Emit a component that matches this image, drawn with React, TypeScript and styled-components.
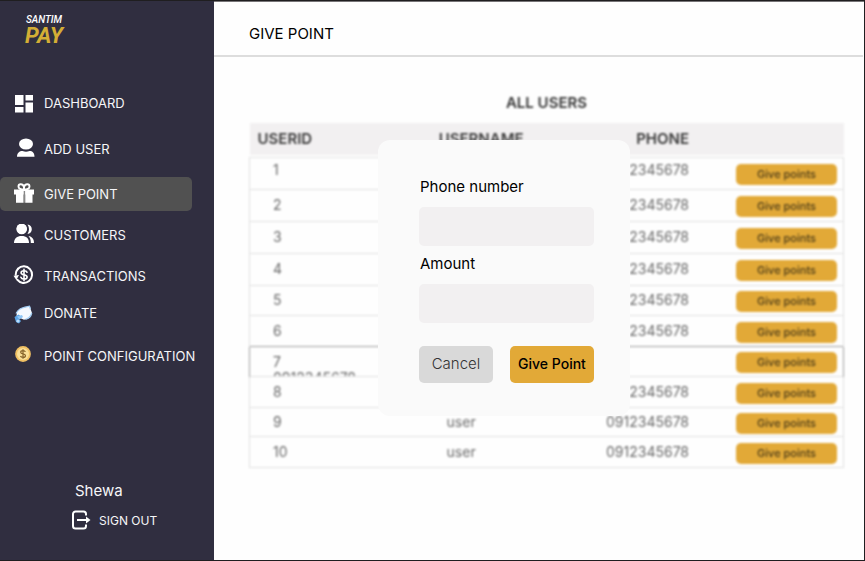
import React from "react";
import styled, { createGlobalStyle, css } from "styled-components";

const GlobalStyle = createGlobalStyle`
  *, *::before, *::after { box-sizing: border-box; }
  body { margin: 0; background: #fff; }
  body, button, input { font-family: Inter, "Open Sans", sans-serif; }
`;

const Frame = styled.div`
  display: flex;
  min-height: 100vh;
  border: 1px solid #1f1e20;
  border-left: 0;
`;

const Sidebar = styled.aside`
  display: flex;
  flex-direction: column;
  flex: 0 0 214px;
  padding: 11px 0 28px;
  background: #302e40;
  color: #f6f6f8;
`;

const Logo = styled.div`
  display: flex;
  flex-direction: column;
  width: 88px;
  height: 68px;
  align-items: center;
  font-family: Roboto, sans-serif;
  font-style: italic;
`;

const LogoTop = styled.span`
  font-size: 10px;
  line-height: 15px;
  font-weight: 500;
  color: #fff;
`;

const LogoBottom = styled.span`
  font-size: 22px;
  line-height: 17px;
  font-weight: 700;
  color: #d4ae35;
`;

const Menu = styled.ul`
  display: grid;
  grid-template-rows: 46px 46px 44px 38px 44px 30px 56px;
  align-items: center;
  margin: 0;
  padding: 0;
  list-style: none;
`;

const MenuLink = styled.a<{ $active?: boolean }>`
  display: flex;
  align-items: center;
  gap: 9px;
  width: 192px;
  height: 34px;
  padding-left: 13px;
  border-radius: 5px;
  color: inherit;
  font-size: 13px;
  white-space: nowrap;
  text-decoration: none;
  ${(p) => p.$active && css`background: #515151;`}

  svg { flex: none; }
`;

const Account = styled.div`
  display: flex;
  flex-direction: column;
  gap: 5px;
  margin-top: auto;
  padding-left: 71px;
`;

const AccountName = styled.span`
  padding-left: 4px;
  font-size: 15px;
  line-height: 24px;
`;

const SignOut = styled.button`
  display: flex;
  align-items: center;
  gap: 8px;
  height: 24px;
  padding: 0;
  border: 0;
  background: none;
  color: inherit;
  font-size: 12px;
`;

const Main = styled.main`
  position: relative;
  flex: 1;
  min-width: 0;
  border-top: 1px solid #777577;
  background: #fefefe;
`;

const TopBar = styled.header`
  display: flex;
  align-items: center;
  height: 55px;
  margin-right: 1px;
  padding: 10px 0 0 35px;
  border-bottom: 2px solid #dddddd;
`;

const PageTitle = styled.h1`
  margin: 0;
  font-size: 15px;
  font-weight: 400;
  color: #000;
`;

const Users = styled.section`
  padding: 34px 20px 0 35px;
  filter: blur(0.8px);
`;

const UsersTitle = styled.h2`
  margin: 0 0 8px;
  font-size: 15px;
  line-height: 24px;
  font-weight: 600;
  text-align: center;
  color: #333;
`;

const UserTable = styled.table`
  width: 100%;
  table-layout: fixed;
  border-collapse: collapse;
  font-size: 14px;
  line-height: 24px;
  color: #6a6a6a;
`;

const Column = styled.col<{ $share: number }>`
  width: ${(p) => p.$share}%;
`;

const HeadCell = styled.th<{ $align?: string }>`
  height: 34px;
  padding: 0 0 2px 8px;
  box-shadow: inset 0 -2px #fefefe;
  background: #f2f0f1;
  color: #3a3a3a;
  font-size: 15px;
  font-weight: 600;
  text-align: ${(p) => p.$align ?? "left"};
`;

const NameHeadCell = styled(HeadCell)`
  padding-left: 0;
  text-align: center;
`;

const Row = styled.tr<{ $height: number; $selected?: boolean }>`
  height: ${(p) => p.$height}px;
  border: 1px solid #e2e2e2;
  border-bottom: none;
  ${(p) => p.$selected && css`border-color: #a0a0a0;`}

  &:last-child { border-bottom: 1px solid #e2e2e2; }
  &:first-child td:not(:last-child) { vertical-align: top; }
`;

const Cell = styled.td<{ $align?: string }>`
  padding: 0;
  text-align: ${(p) => p.$align ?? "left"};
`;

const NameCell = styled(Cell)`
  padding-right: 40px;
  text-align: center;
`;

const IdBox = styled.div<{ $clip?: boolean }>`
  padding-left: 23px;
  ${(p) => p.$clip && css`
    height: 29px;
    padding-top: 4px;
    line-height: 22px;
    overflow: hidden;
  `}
`;

const WrappedPhone = styled.div`
  line-height: 10px;
`;

const ActionCell = styled.td`
  padding: 3px 6px 0 0;
  text-align: right;
  line-height: 0;
`;

const RowButton = styled.button`
  width: 101px;
  height: 21px;
  padding: 0;
  border: 0;
  border-radius: 5px;
  background: #e2a937;
  color: #4a3a18;
  font-size: 11px;
  line-height: 21px;
  font-weight: 500;
`;

const Dialog = styled.form`
  position: absolute;
  top: 138px;
  left: 164px;
  display: flex;
  flex-direction: column;
  width: 252px;
  padding: 36px 36px 33px 41px;
  border-radius: 12px;
  background: #fafafa;
`;

const Field = styled.div`
  display: flex;
  flex-direction: column;
  gap: 9px;
  margin-bottom: 7px;
`;

const FieldLabel = styled.label`
  padding-left: 1px;
  font-size: 15px;
  line-height: 22px;
  color: #000;
`;

const FieldInput = styled.input`
  width: 100%;
  height: 39px;
  padding: 0 10px;
  border: 0;
  border-radius: 5px;
  background: #f2f0f1;
  font-size: 14px;
`;

const DialogActions = styled.div`
  display: flex;
  justify-content: space-between;
  margin-top: 16px;
`;

const DialogButton = styled.button<{ $primary?: boolean }>`
  width: ${(p) => (p.$primary ? 84 : 74)}px;
  height: 37px;
  padding: 0 0 3px;
  border: 0;
  border-radius: 5px;
  background: ${(p) => (p.$primary ? "#e2a937" : "#d9d9d9")};
  color: ${(p) => (p.$primary ? "#000" : "#333")};
  font-size: ${(p) => (p.$primary ? 14 : 15)}px;
  font-weight: ${(p) => (p.$primary ? 500 : 300)};
  white-space: nowrap;
`;

const Svg = ({ children }: { children: React.ReactNode }) => (
  <svg width="22" height="22" viewBox="0 0 22 22" fill="#fff" aria-hidden="true">
    {children}
  </svg>
);

const DashboardIcon = () => (
  <Svg>
    <path d="M2 3h8.500v10H2zM2 15h8.500v5.500H2zM12.500 3H20v5.500h-7.500zM12.500 10.500H20v10h-7.500z" />
  </Svg>
);

const UserIcon = () => (
  <Svg>
    <ellipse cx="13" cy="6" rx="7" ry="5.600" />
    <path d="M4 18.800c0-4 2.500-5.800 5.500-5.800 2.500 1 4.500 1 7 0 3 0 5 1.800 5 5.800z" />
  </Svg>
);

const GiftIcon = () => (
  <Svg>
    <path d="M1 6.500h20v5H1zM3 11h7.600v8.700H3zM12.200 11H19.500v8.700h-7.300z" />
    <g fill="none" stroke="#fff" strokeWidth="1.900">
      <path d="M11 6.500C9 6.500 5.500 6 5.500 3.500S9.500 0 11 4z" />
      <path d="M11 6.500c2 0 5.500-.500 5.500-3S12.500 0 11 4z" />
    </g>
    <path d="M10.700 8h1.400v11.700h-1.400z" fill="#888" />
  </Svg>
);

const CustomersIcon = () => (
  <Svg>
    <circle cx="8.700" cy="4.800" r="5" />
    <circle cx="8.700" cy="5" r="5.300" />
    <path d="M1 19c0-4.500 3-7 7.700-7s7.300 2.500 7.300 7z" />
    <path d="M14.500.500c2.700.300 4.300 2.200 4.300 4.700s-1.600 4.500-4.300 4.700c2-3.100 2-6.300 0-9.400z" />
    <path d="M15.500 12c3.500.700 5.700 3 5.500 7h-3.200c0-3.300-.600-5.200-2.300-7z" />
  </Svg>
);

const TransactionsIcon = () => (
  <Svg>
    <g fill="none" stroke="#fff" strokeWidth="2" strokeLinecap="round" transform="translate(0 -1)">
      <path d="M5 4.700a8.300 8.300 0 1 1-.800 11" />
      <path d="M2.700 10.800A8.300 8.300 0 0 1 5 4.700" />
      <path d="M14 8.300c-.400-1.300-1.500-1.600-2.900-1.600-1.700 0-3 .600-3 2 0 3 6 1.300 6 4.300 0 1.500-1.400 2.100-3.100 2.100-1.500 0-2.700-.500-3.100-1.800M11 5.200v11.500" strokeWidth="1.600" />
    </g>
    <path d="M.500 10.800l5.500-.700-2.700 4.800z" />
  </Svg>
);

const DonateIcon = () => (
  <Svg>
    <path d="M4 9.500L7.500 6.500 13 5l4-.500.800 3L19 11l-3.500 5.500-4.500 1.200-4-1.700-3.500-2z" fill="#f4f9ff" />
    <path d="M3 11.500C5 8 8 6 12 5.200l4.500-1 1 3M18.800 11c-.800 3.500-3 5.500-6.300 6.300" fill="none" stroke="#a5cff5" strokeWidth="1.200" />
    <path d="M1.500 15l4-2.500 2 1.500-1.500 3 2 2-2 2.500-3-1.500z" fill="#5ba4e6" />
    <path d="M4 14.500l5-1.500 1 2-3.500 2.500z" fill="#8fc6f6" />
    <circle cx="5" cy="19" r="1.600" fill="#b9dcfb" />
  </Svg>
);

const CoinIcon = () => (
  <Svg>
    <circle cx="10" cy="9" r="7.900" fill="#f0c063" />
    <circle cx="10" cy="9" r="6" fill="#fadf97" />
    <path d="M12.400 6.900c-.400-1-1.300-1.300-2.400-1.300-1.300 0-2.300.600-2.300 1.600 0 2.500 4.800 1 4.800 3.500 0 1.100-1.100 1.700-2.500 1.700-1.200 0-2.200-.400-2.500-1.400M10 4.200v9.600" fill="none" stroke="#86632a" strokeWidth="1.200" />
  </Svg>
);

const SignOutIcon = () => (
  <svg width="20" height="20" viewBox="0 0 20 20" fill="none" stroke="#fff" strokeWidth="2" aria-hidden="true">
    <path d="M15 5.500V4a2.500 2.500 0 0 0-2.500-2.500H4.500A2.500 2.500 0 0 0 2 4v12a2.500 2.500 0 0 0 2.500 2.500h8A2.500 2.500 0 0 0 15 16v-1.500" />
    <path d="M6 10h11" />
    <path d="M15 6.500l4.500 3.500-4.500 3.500z" fill="#fff" stroke="none" />
  </svg>
);

const menu = [
  { label: "DASHBOARD", Icon: DashboardIcon },
  { label: "ADD USER", Icon: UserIcon },
  { label: "GIVE POINT", Icon: GiftIcon, active: true },
  { label: "CUSTOMERS", Icon: CustomersIcon },
  { label: "TRANSACTIONS", Icon: TransactionsIcon },
  { label: "DONATE", Icon: DonateIcon },
  { label: "POINT CONFIGURATION", Icon: CoinIcon },
];

const phone = "0912345678";

const users = [
  { id: 1, height: 32 },
  { id: 2, height: 32 },
  { id: 3, height: 32 },
  { id: 4, height: 32 },
  { id: 5, height: 30 },
  { id: 6, height: 31 },
  { id: 7, height: 30, selected: true },
  { id: 8, height: 31 },
  { id: 9, height: 29 },
  { id: 10, height: 31 },
];

export default function App() {
  return (
    <>
      <GlobalStyle />
      <Frame>
        <Sidebar>
          <Logo>
            <LogoTop>SANTIM</LogoTop>
            <LogoBottom>PAY</LogoBottom>
          </Logo>
          <nav>
            <Menu>
              {menu.map(({ label, Icon, active }) => (
                <li key={label}>
                  <MenuLink href="#" $active={active} aria-current={active ? "page" : undefined}>
                    <Icon />
                    {label}
                  </MenuLink>
                </li>
              ))}
            </Menu>
          </nav>
          <Account>
            <AccountName>Shewa</AccountName>
            <SignOut type="button">
              <SignOutIcon />
              SIGN OUT
            </SignOut>
          </Account>
        </Sidebar>
        <Main>
          <TopBar>
            <PageTitle>GIVE POINT</PageTitle>
          </TopBar>
          <Users>
            <UsersTitle>ALL USERS</UsersTitle>
            <UserTable>
              <colgroup>
                <Column $share={22} />
                <Column $share={34} />
                <Column $share={18} />
                <Column $share={26} />
              </colgroup>
              <thead>
                <tr>
                  <HeadCell>USERID</HeadCell>
                  <NameHeadCell>USERNAME</NameHeadCell>
                  <HeadCell $align="right">PHONE</HeadCell>
                  <HeadCell />
                </tr>
              </thead>
              <tbody>
                {users.map((u) => (
                  <Row key={u.id} $height={u.height} $selected={u.selected}>
                    <Cell>
                      <IdBox $clip={u.selected}>
                        {u.id}
                        {u.selected && <WrappedPhone>{phone}</WrappedPhone>}
                      </IdBox>
                    </Cell>
                    <NameCell>{!u.selected && "user"}</NameCell>
                    <Cell $align="right">{!u.selected && phone}</Cell>
                    <ActionCell>
                      <RowButton type="button">Give points</RowButton>
                    </ActionCell>
                  </Row>
                ))}
              </tbody>
            </UserTable>
          </Users>
          <Dialog role="dialog" aria-label="Give point" onSubmit={(e) => e.preventDefault()}>
            <Field>
              <FieldLabel htmlFor="phone">Phone number</FieldLabel>
              <FieldInput id="phone" type="tel" />
            </Field>
            <Field>
              <FieldLabel htmlFor="amount">Amount</FieldLabel>
              <FieldInput id="amount" type="text" />
            </Field>
            <DialogActions>
              <DialogButton type="button">Cancel</DialogButton>
              <DialogButton type="submit" $primary>Give Point</DialogButton>
            </DialogActions>
          </Dialog>
        </Main>
      </Frame>
    </>
  );
}
